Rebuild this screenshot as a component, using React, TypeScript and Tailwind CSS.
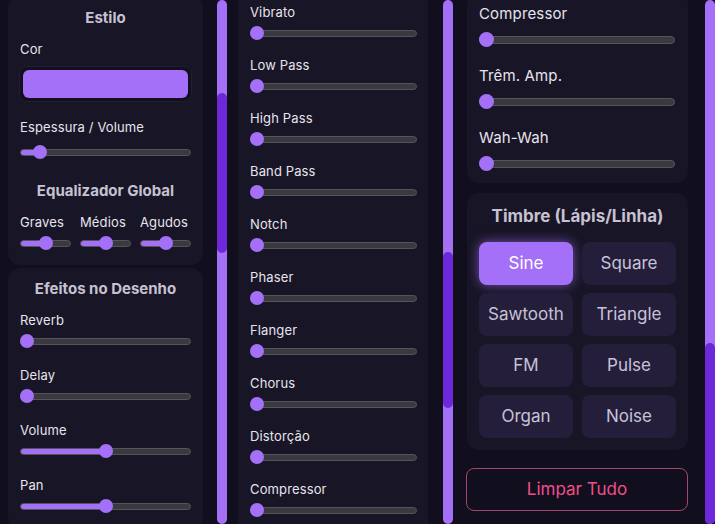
import React from "react";

const font = { fontFamily: "Inter, 'Noto Sans', sans-serif" };

interface ISlider {
  value: number;
  big?: boolean;
}

// range slider drawn with divs, thumb sits over the track
const Slider = ({ value, big }: ISlider) => {
  const t = big ? 15 : 14;
  return (
    <div className={`relative flex items-center ${big ? "h-[15px]" : "h-[14px]"}`}>
      <div
        className={`w-full rounded-full bg-[#3a393f] border border-[#55545a] overflow-hidden ${
          big ? "h-[8px]" : "h-[7px]"
        }`}
      >
        <div
          className="h-full bg-[#a370f7]"
          style={{ width: `calc(${value / 100} * (100% - ${t}px) + ${t / 2}px)` }}
        />
      </div>
      <div
        className={`absolute top-0 rounded-full bg-[#a370f7] ${big ? "w-[15px] h-[15px]" : "w-[14px] h-[14px]"}`}
        style={{ left: `calc(${value / 100} * (100% - ${t}px))` }}
      />
    </div>
  );
};

const Scrollbar = ({ thumb }: { thumb: string }) => (
  <div className="w-[10px] h-full flex-none flex flex-col bg-[#a370f7] rounded-full">
    <div className={`w-full rounded-full bg-[#6d28d9] ${thumb}`} />
  </div>
);

const Title = ({ children }: { children: React.ReactNode }) => (
  <p className="text-center text-[15px] leading-[20px] font-bold text-[#c6c2d1]">{children}</p>
);

const Label = ({ children }: { children: React.ReactNode }) => (
  <p className="text-[13px] leading-[18px] text-[#e6e4ec] tracking-[0.01em]">{children}</p>
);

const middleFx = [
  "Vibrato",
  "Low Pass",
  "High Pass",
  "Band Pass",
  "Notch",
  "Phaser",
  "Flanger",
  "Chorus",
  "Distorção",
  "Compressor",
];

const timbres = ["Sine", "Square", "Sawtooth", "Triangle", "FM", "Pulse", "Organ", "Noise"];

const App = () => {
  return (
    <div className="flex w-[715px] h-[524px] overflow-hidden bg-[#110e1d]" style={font}>
      {/* coluna 1 */}
      <div className="flex w-[227px] h-full">
        <div className="flex-1 flex flex-col gap-[3px] pl-[8px] pr-[14px] -mt-[4px] overflow-hidden">
          <div className="bg-[#181526] rounded-xl px-3 pt-3 pb-[15px]">
            <Title>Estilo</Title>
            <div className="mt-3">
              <Label>Cor</Label>
            </div>
            <div className="mt-[8px] h-[36px] -mx-px p-[3px] rounded-lg bg-[#120f1f] border border-[#221e33]">
              <div className="h-full rounded-md bg-[#a370f7]" />
            </div>
            <div className="mt-4">
              <Label>Espessura / Volume</Label>
            </div>
            <div className="mt-[9px]">
              <Slider value={8} />
            </div>
            <div className="mt-[22px]">
              <Title>Equalizador Global</Title>
            </div>
            <div className="mt-3 grid grid-cols-3 gap-[9px]">
              {["Graves", "Médios", "Agudos"].map((n) => (
                <div key={n}>
                  <Label>{n}</Label>
                  <div className="mt-[5px]">
                    <Slider value={50} />
                  </div>
                </div>
              ))}
            </div>
          </div>
          <div className="bg-[#181526] rounded-xl px-3 pt-[11px] pb-4 flex-1">
            <Title>Efeitos no Desenho</Title>
            <div className="mt-3 flex flex-col gap-[18px]">
              {[
                ["Reverb", 0],
                ["Delay", 0],
                ["Volume", 50],
                ["Pan", 50],
              ].map(([n, v]) => (
                <div key={n as string}>
                  <Label>{n}</Label>
                  <div className="mt-[5px]">
                    <Slider value={v as number} />
                  </div>
                </div>
              ))}
            </div>
          </div>
        </div>
        <Scrollbar thumb="mt-[93px] h-[160px]" />
      </div>

      {/* coluna 2 */}
      <div className="flex w-[226px] h-full">
        <div className="flex-1 pl-[11px] pr-[15px] -mt-[9px] overflow-hidden">
          <div className="bg-[#181526] rounded-xl pl-3 pr-[11px] pt-3 pb-4 flex flex-col gap-4 h-[600px]">
            {middleFx.map((n) => (
              <div key={n}>
                <Label>{n}</Label>
                <div className="mt-[5px]">
                  <Slider value={0} />
                </div>
              </div>
            ))}
          </div>
        </div>
        <Scrollbar thumb="mt-[252px] h-[156px]" />
      </div>

      {/* coluna 3 */}
      <div className="flex w-[262px] h-full">
        <div className="flex-1 flex flex-col pl-[14px] pr-[17px] -mt-[8px] overflow-hidden">
          <div className="bg-[#181526] rounded-xl pl-3 pr-[13px] pt-3 pb-3 flex flex-col gap-[19px]">
            {["Compressor", "Trêm. Amp.", "Wah-Wah"].map((n) => (
              <div key={n}>
                <p className="text-[15px] leading-[20px] text-[#e6e4ec] tracking-[0.01em]">{n}</p>
                <div className="mt-[8px]">
                  <Slider value={0} big />
                </div>
              </div>
            ))}
          </div>
          <div className="mt-[10px] bg-[#181526] rounded-xl px-3 pt-[11px] pb-3">
            <p className="text-center text-[17px] leading-[24px] font-bold text-[#c6c2d1]">
              Timbre (Lápis/Linha)
            </p>
            <div className="mt-[14px] grid grid-cols-2 gap-x-[9px] gap-y-[8px]">
              {timbres.map((t) => (
                <button
                  key={t}
                  type="button"
                  className={`h-[43px] rounded-lg text-[17px] ${
                    t === "Sine"
                      ? "bg-[#a370f7] text-white shadow-[0_0_12px_rgba(163,112,247,0.65)]"
                      : "bg-[#241e3a] text-[#c8c2d8]"
                  }`}
                >
                  {t}
                </button>
              ))}
            </div>
          </div>
          <button
            type="button"
            className="mt-[18px] -ml-px h-[43px] rounded-lg border-[1.5px] border-[#a8426e] text-[17px] text-[#f04e8c]"
          >
            Limpar Tudo
          </button>
        </div>
        <Scrollbar thumb="mt-[343px] h-[200px]" />
      </div>
    </div>
  );
};

export default App;
